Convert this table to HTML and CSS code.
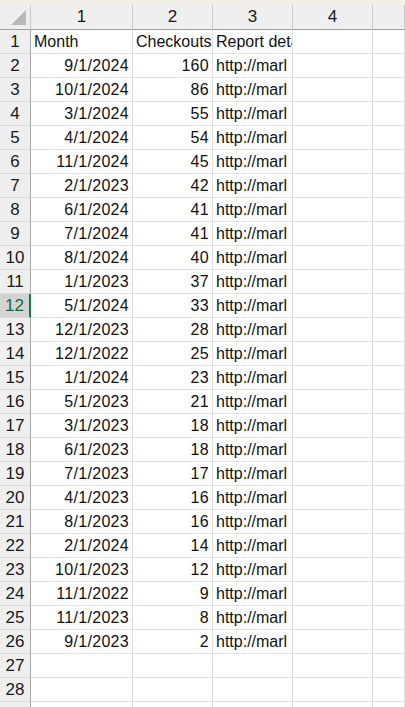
FILE: index.html
```html
<!DOCTYPE html>
<html>
<head>
<meta charset="utf-8">
<link rel="stylesheet" href="styles.css">
</head>
<body>
<div class="topband"></div>
<div class="sheet">
  <div class="corner"><span class="tri"></span></div>
  <div class="colhead">1</div>
  <div class="colhead">2</div>
  <div class="colhead">3</div>
  <div class="colhead">4</div>
  <div class="colhead"></div>

  <div class="rowhead">1</div><div class="cell">Month</div><div class="cell">Checkouts</div><div class="cell">Report deta</div><div class="cell"></div><div class="cell"></div>
  <div class="rowhead">2</div><div class="cell num">9/1/2024</div><div class="cell num">160</div><div class="cell">http://marl</div><div class="cell"></div><div class="cell"></div>
  <div class="rowhead">3</div><div class="cell num">10/1/2024</div><div class="cell num">86</div><div class="cell">http://marl</div><div class="cell"></div><div class="cell"></div>
  <div class="rowhead">4</div><div class="cell num">3/1/2024</div><div class="cell num">55</div><div class="cell">http://marl</div><div class="cell"></div><div class="cell"></div>
  <div class="rowhead">5</div><div class="cell num">4/1/2024</div><div class="cell num">54</div><div class="cell">http://marl</div><div class="cell"></div><div class="cell"></div>
  <div class="rowhead">6</div><div class="cell num">11/1/2024</div><div class="cell num">45</div><div class="cell">http://marl</div><div class="cell"></div><div class="cell"></div>
  <div class="rowhead">7</div><div class="cell num">2/1/2023</div><div class="cell num">42</div><div class="cell">http://marl</div><div class="cell"></div><div class="cell"></div>
  <div class="rowhead">8</div><div class="cell num">6/1/2024</div><div class="cell num">41</div><div class="cell">http://marl</div><div class="cell"></div><div class="cell"></div>
  <div class="rowhead">9</div><div class="cell num">7/1/2024</div><div class="cell num">41</div><div class="cell">http://marl</div><div class="cell"></div><div class="cell"></div>
  <div class="rowhead">10</div><div class="cell num">8/1/2024</div><div class="cell num">40</div><div class="cell">http://marl</div><div class="cell"></div><div class="cell"></div>
  <div class="rowhead">11</div><div class="cell num">1/1/2023</div><div class="cell num">37</div><div class="cell">http://marl</div><div class="cell"></div><div class="cell"></div>
  <div class="rowhead selected">12</div><div class="cell num">5/1/2024</div><div class="cell num">33</div><div class="cell">http://marl</div><div class="cell"></div><div class="cell"></div>
  <div class="rowhead">13</div><div class="cell num">12/1/2023</div><div class="cell num">28</div><div class="cell">http://marl</div><div class="cell"></div><div class="cell"></div>
  <div class="rowhead">14</div><div class="cell num">12/1/2022</div><div class="cell num">25</div><div class="cell">http://marl</div><div class="cell"></div><div class="cell"></div>
  <div class="rowhead">15</div><div class="cell num">1/1/2024</div><div class="cell num">23</div><div class="cell">http://marl</div><div class="cell"></div><div class="cell"></div>
  <div class="rowhead">16</div><div class="cell num">5/1/2023</div><div class="cell num">21</div><div class="cell">http://marl</div><div class="cell"></div><div class="cell"></div>
  <div class="rowhead">17</div><div class="cell num">3/1/2023</div><div class="cell num">18</div><div class="cell">http://marl</div><div class="cell"></div><div class="cell"></div>
  <div class="rowhead">18</div><div class="cell num">6/1/2023</div><div class="cell num">18</div><div class="cell">http://marl</div><div class="cell"></div><div class="cell"></div>
  <div class="rowhead">19</div><div class="cell num">7/1/2023</div><div class="cell num">17</div><div class="cell">http://marl</div><div class="cell"></div><div class="cell"></div>
  <div class="rowhead">20</div><div class="cell num">4/1/2023</div><div class="cell num">16</div><div class="cell">http://marl</div><div class="cell"></div><div class="cell"></div>
  <div class="rowhead">21</div><div class="cell num">8/1/2023</div><div class="cell num">16</div><div class="cell">http://marl</div><div class="cell"></div><div class="cell"></div>
  <div class="rowhead">22</div><div class="cell num">2/1/2024</div><div class="cell num">14</div><div class="cell">http://marl</div><div class="cell"></div><div class="cell"></div>
  <div class="rowhead">23</div><div class="cell num">10/1/2023</div><div class="cell num">12</div><div class="cell">http://marl</div><div class="cell"></div><div class="cell"></div>
  <div class="rowhead">24</div><div class="cell num">11/1/2022</div><div class="cell num">9</div><div class="cell">http://marl</div><div class="cell"></div><div class="cell"></div>
  <div class="rowhead">25</div><div class="cell num">11/1/2023</div><div class="cell num">8</div><div class="cell">http://marl</div><div class="cell"></div><div class="cell"></div>
  <div class="rowhead">26</div><div class="cell num">9/1/2023</div><div class="cell num">2</div><div class="cell">http://marl</div><div class="cell"></div><div class="cell"></div>
  <div class="rowhead">27</div><div class="cell"></div><div class="cell"></div><div class="cell"></div><div class="cell"></div><div class="cell"></div>
  <div class="rowhead">28</div><div class="cell"></div><div class="cell"></div><div class="cell"></div><div class="cell"></div><div class="cell"></div>
  <div class="rowhead"></div><div class="cell"></div><div class="cell"></div><div class="cell"></div><div class="cell"></div><div class="cell"></div>
</div>
</body>
</html>
```

FILE: styles.css
```css
html, body {
  margin: 0;
  padding: 0;
  background: #ffffff;
  overflow: hidden;
}

body {
  font-family: "Liberation Sans", Arial, sans-serif;
  font-size: 16px;
  color: #111111;
}

.topband {
  height: 5px;
  background: #f2efe8;
}

.sheet {
  display: grid;
  grid-template-columns: 31px 102px 80px 80px 80px minmax(0, 1fr);
  grid-auto-rows: 24px;
  grid-template-rows: 25px;
}

.corner {
  background: #efefef;
  border-right: 1px solid #c9c9c9;
  border-bottom: 1px solid #9e9e9e;
  position: relative;
}

.tri {
  position: absolute;
  right: 4px;
  bottom: 4px;
  width: 0;
  height: 0;
  border-left: 15px solid transparent;
  border-bottom: 15px solid #b9b9b9;
}

.colhead {
  background: #efefef;
  border-right: 1px solid #c9c9c9;
  border-bottom: 1px solid #9e9e9e;
  display: flex;
  align-items: center;
  justify-content: center;
  font-size: 17px;
  color: #1a1a1a;
}

.rowhead {
  background: #efefef;
  border-right: 1px solid #a8a8a8;
  border-bottom: 1px solid #d6d6d6;
  display: flex;
  align-items: center;
  justify-content: center;
  font-size: 17px;
  color: #1a1a1a;
}

.rowhead.selected {
  background: #d3d3d3;
  color: #0e6b3a;
  border-right: 2px solid #107c41;
}

.cell {
  min-width: 0;
  border-right: 1px solid #e1e1e1;
  border-bottom: 1px solid #e1e1e1;
  display: flex;
  align-items: center;
  padding: 0 3px;
  white-space: nowrap;
  overflow: hidden;
}

.cell.num {
  justify-content: flex-end;
  letter-spacing: 0.3px;
}
```
